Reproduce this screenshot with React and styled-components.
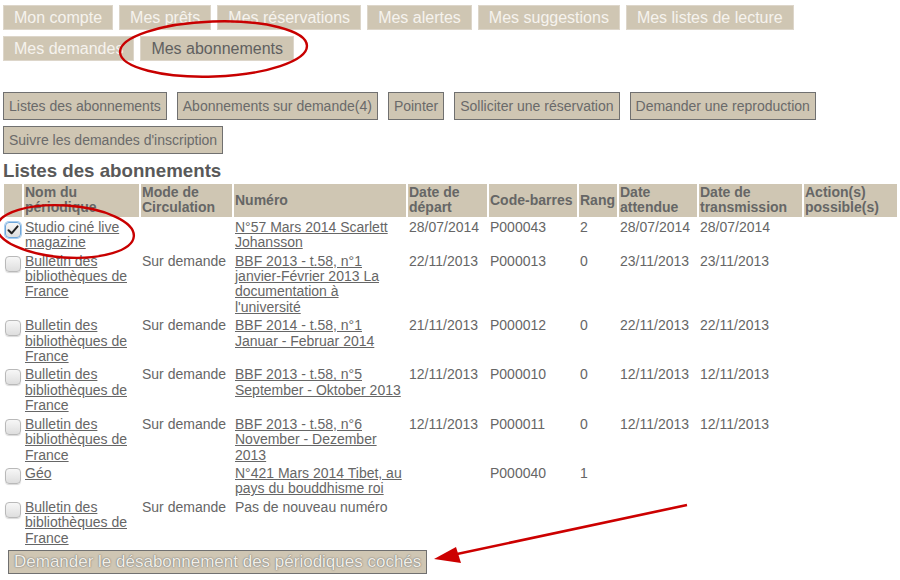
import React from "react";
import styled, { createGlobalStyle } from "styled-components";

const GlobalStyle = createGlobalStyle`
  html, body { margin: 0; padding: 0; background: #fff; }
  body { font-family: "Liberation Sans", Arial, sans-serif; color: #666; }
  * { box-sizing: border-box; }
`;

const TAN = "#cfc6b3";

const Page = styled.div`
  position: relative;
  width: 900px;
  height: 580px;
  overflow: hidden;
`;

const TabBar = styled.nav`
  display: flex;
  flex-wrap: wrap;
  gap: 6px;
  padding: 5px 0 0 3px;
`;

const Tab = styled.span`
  display: inline-block;
  padding: 3px 10px;
  font-size: 16px;
  line-height: 17px;
  background: ${TAN};
  border: 1px solid #ddd6ca;
  color: ${(p) => (p.$active ? "#606060" : "#f6f3ee")};
  white-space: nowrap;
`;

const ActionBar = styled.div`
  display: flex;
  flex-wrap: wrap;
  gap: 6px 10px;
  margin-top: 31px;
  padding-left: 3px;
`;

const ActionButton = styled.span`
  display: inline-block;
  padding: 5px;
  font-size: 14px;
  line-height: 16px;
  background: ${TAN};
  border: 1px solid #707070;
  color: #6a6a6a;
  white-space: nowrap;
`;

const SectionTitle = styled.h3`
  margin: 6px 0 0 3px;
  font-size: 18.72px;
  line-height: 22px;
  font-weight: bold;
  color: #595959;
`;

const Table = styled.table`
  table-layout: fixed;
  width: 897px;
  margin-left: 2px;
  border-collapse: separate;
  border-spacing: 2px;
  font-size: 14px;
  line-height: 15.4px;
  color: #666;
`;

const Th = styled.th`
  background: ${TAN};
  padding: 1px;
  text-align: left;
  vertical-align: middle;
  font-weight: bold;
  color: #666;
`;

const Td = styled.td`
  padding: 1px 1px 0;
  vertical-align: top;
  text-align: left;
`;

const Link = styled.a`
  color: #666;
  text-decoration: underline;
`;

const Box = styled.span`
  display: block;
  width: 16px;
  height: 16px;
  margin-top: 2px;
  border-radius: 4px;
  border: 1px solid ${(p) => (p.$checked ? "#6ea6da" : "#b9b9b9")};
  box-shadow: ${(p) =>
    p.$checked ? "0 0 0 1px #a9cdef" : "0 1px 1px rgba(0,0,0,0.15)"};
  background: linear-gradient(#f7f7f7, #dedede);
  position: relative;
`;

const Footer = styled.div`
  padding-left: 8px;
  margin-top: 2px;
`;

const UnsubscribeButton = styled.span`
  display: inline-block;
  padding: 2px 5px;
  font-size: 17px;
  line-height: 18px;
  background: ${TAN};
  border: 1px solid #707070;
  color: #f2efe8;
  text-shadow: 0 0 1px #6d6d6d, 0 0 2px #8a8a8a;
  white-space: nowrap;
`;

const Overlay = styled.svg`
  position: absolute;
  left: 0;
  top: 0;
  pointer-events: none;
`;

const Checkbox = ({ checked }) => (
  <Box $checked={checked}>
    {checked && (
      <svg width="14" height="14" viewBox="0 0 14 14" style={{ position: "absolute", left: 0, top: 0 }}>
        <path d="M2.5 7.2 L5.6 10.3 L11.6 3.4" fill="none" stroke="#222" strokeWidth="2" strokeLinejoin="round" strokeLinecap="round" />
      </svg>
    )}
  </Box>
);

const tabs = [
  "Mon compte",
  "Mes prêts",
  "Mes réservations",
  "Mes alertes",
  "Mes suggestions",
  "Mes listes de lecture",
  "Mes demandes",
  "Mes abonnements",
];

const actions = [
  "Listes des abonnements",
  "Abonnements sur demande(4)",
  "Pointer",
  "Solliciter une réservation",
  "Demander une reproduction",
  "Suivre les demandes d'inscription",
];

const cols = [18, 115, 91, 172, 79, 88, 38, 78, 103, 93];

const headers = [
  "",
  "Nom du périodique",
  "Mode de Circulation",
  "Numéro",
  "Date de départ",
  "Code-barres",
  "Rang",
  "Date attendue",
  "Date de transmission",
  "Action(s) possible(s)",
];

const BBF = "Bulletin des bibliothèques de France";

const rows = [
  { checked: true, name: "Studio ciné live magazine", mode: "", num: "N°57 Mars 2014 Scarlett Johansson", dep: "28/07/2014", code: "P000043", rang: "2", att: "28/07/2014", trans: "28/07/2014" },
  { name: BBF, mode: "Sur demande", num: "BBF 2013 - t.58, n°1 janvier-Février 2013 La documentation à l'université", dep: "22/11/2013", code: "P000013", rang: "0", att: "23/11/2013", trans: "23/11/2013" },
  { name: BBF, mode: "Sur demande", num: "BBF 2014 - t.58, n°1 Januar - Februar 2014", dep: "21/11/2013", code: "P000012", rang: "0", att: "22/11/2013", trans: "22/11/2013" },
  { name: BBF, mode: "Sur demande", num: "BBF 2013 - t.58, n°5 September - Oktober 2013", dep: "12/11/2013", code: "P000010", rang: "0", att: "12/11/2013", trans: "12/11/2013" },
  { name: BBF, mode: "Sur demande", num: "BBF 2013 - t.58, n°6 November - Dezember 2013", dep: "12/11/2013", code: "P000011", rang: "0", att: "12/11/2013", trans: "12/11/2013" },
  { name: "Géo", mode: "", num: "N°421 Mars 2014 Tibet, au pays du bouddhisme roi", dep: "", code: "P000040", rang: "1", att: "", trans: "" },
  { name: BBF, mode: "Sur demande", num: "Pas de nouveau numéro", plain: true, dep: "", code: "", rang: "", att: "", trans: "" },
];

export default function App() {
  return (
    <Page>
      <GlobalStyle />
      <TabBar>
        {tabs.map((t, i) => (
          <Tab key={t} $active={i === tabs.length - 1}>
            {t}
          </Tab>
        ))}
      </TabBar>
      <ActionBar>
        {actions.map((a) => (
          <ActionButton key={a}>{a}</ActionButton>
        ))}
      </ActionBar>
      <SectionTitle>Listes des abonnements</SectionTitle>
      <Table>
        <colgroup>
          {cols.map((w, i) => (
            <col key={i} style={{ width: w }} />
          ))}
        </colgroup>
        <thead>
          <tr>
            {headers.map((h, i) => (
              <Th key={i}>{h}</Th>
            ))}
          </tr>
        </thead>
        <tbody>
          {rows.map((r, i) => (
            <tr key={i}>
              <Td>
                <Checkbox checked={!!r.checked} />
              </Td>
              <Td>
                <Link href="#">{r.name}</Link>
              </Td>
              <Td>{r.mode}</Td>
              <Td>{r.plain ? r.num : <Link href="#">{r.num}</Link>}</Td>
              <Td>{r.dep}</Td>
              <Td>{r.code}</Td>
              <Td>{r.rang}</Td>
              <Td>{r.att}</Td>
              <Td>{r.trans}</Td>
              <Td></Td>
            </tr>
          ))}
        </tbody>
      </Table>
      <Footer>
        <UnsubscribeButton>Demander le désabonnement des périodiques cochés</UnsubscribeButton>
      </Footer>
      <Overlay width="900" height="580" viewBox="0 0 900 580">
        <ellipse cx="213.5" cy="49" rx="93.5" ry="27.5" transform="rotate(-2 213.5 49)" fill="none" stroke="#c80000" strokeWidth="2.4" />
        <ellipse cx="65.5" cy="231.5" rx="68.5" ry="26" transform="rotate(4 65.5 231.5)" fill="none" stroke="#c80000" strokeWidth="2.4" />
        <line x1="687" y1="505" x2="450" y2="555.5" stroke="#cc0000" strokeWidth="2.6" />
        <polygon points="434,559 456,547 461,563" fill="#cc0000" />
      </Overlay>
    </Page>
  );
}
